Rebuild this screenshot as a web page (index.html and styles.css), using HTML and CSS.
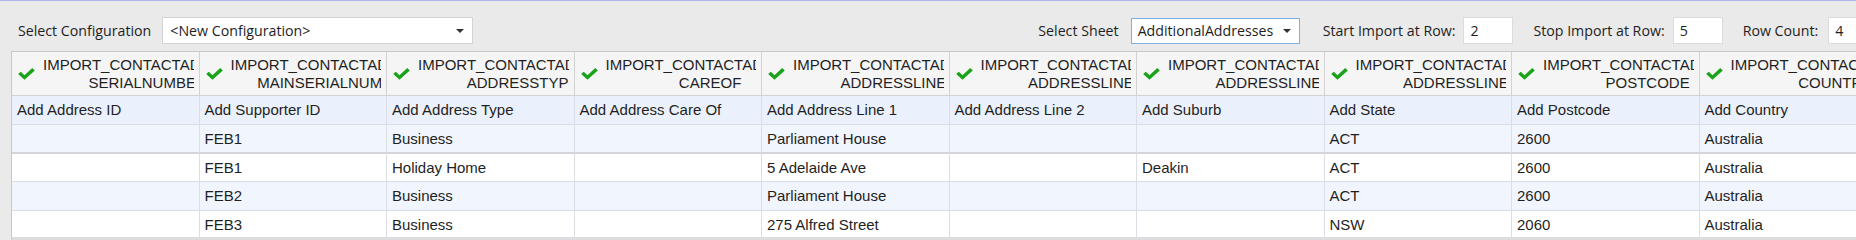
FILE: index.html
```html
<!DOCTYPE html>
<html>
<head>
<meta charset="utf-8">
<link rel="stylesheet" href="styles.css">
</head>
<body>
<div class="app">
  <div class="toolbar">
    <span class="label">Select Configuration</span>
    <div class="combo combo-config"><span class="combo-text">&lt;New Configuration&gt;</span><span class="arrow"></span></div>
    <div class="right">
      <span class="label">Select Sheet</span>
      <div class="combo combo-sheet"><span class="combo-text">AdditionalAddresses</span><span class="arrow"></span></div>
      <span class="label lbl-start">Start Import at Row:</span>
      <div class="input">2</div>
      <span class="label lbl-stop">Stop Import at Row:</span>
      <div class="input">5</div>
      <span class="label lbl-count">Row Count:</span>
      <div class="input input-wide">4</div>
    </div>
  </div>

  <div class="grid">
    <div class="hcell"><svg class="check" viewBox="0 0 18 13"><polygon points="0,6.5 2.8,4 6.8,7.8 15.2,0 18,2.6 6.8,12.8"/></svg><div class="htext"><div class="hlines"><span>IMPORT_CONTACTADDRESS</span><span>SERIALNUMBER</span></div></div></div>
    <div class="hcell"><svg class="check" viewBox="0 0 18 13"><polygon points="0,6.5 2.8,4 6.8,7.8 15.2,0 18,2.6 6.8,12.8"/></svg><div class="htext"><div class="hlines"><span>IMPORT_CONTACTADDRESS</span><span>MAINSERIALNUMBER</span></div></div></div>
    <div class="hcell"><svg class="check" viewBox="0 0 18 13"><polygon points="0,6.5 2.8,4 6.8,7.8 15.2,0 18,2.6 6.8,12.8"/></svg><div class="htext"><div class="hlines"><span>IMPORT_CONTACTADDRESS</span><span>ADDRESSTYPE</span></div></div></div>
    <div class="hcell"><svg class="check" viewBox="0 0 18 13"><polygon points="0,6.5 2.8,4 6.8,7.8 15.2,0 18,2.6 6.8,12.8"/></svg><div class="htext"><div class="hlines"><span>IMPORT_CONTACTADDRESS</span><span>CAREOF</span></div></div></div>
    <div class="hcell"><svg class="check" viewBox="0 0 18 13"><polygon points="0,6.5 2.8,4 6.8,7.8 15.2,0 18,2.6 6.8,12.8"/></svg><div class="htext"><div class="hlines"><span>IMPORT_CONTACTADDRESS</span><span>ADDRESSLINE1</span></div></div></div>
    <div class="hcell"><svg class="check" viewBox="0 0 18 13"><polygon points="0,6.5 2.8,4 6.8,7.8 15.2,0 18,2.6 6.8,12.8"/></svg><div class="htext"><div class="hlines"><span>IMPORT_CONTACTADDRESS</span><span>ADDRESSLINE2</span></div></div></div>
    <div class="hcell"><svg class="check" viewBox="0 0 18 13"><polygon points="0,6.5 2.8,4 6.8,7.8 15.2,0 18,2.6 6.8,12.8"/></svg><div class="htext"><div class="hlines"><span>IMPORT_CONTACTADDRESS</span><span>ADDRESSLINE3</span></div></div></div>
    <div class="hcell"><svg class="check" viewBox="0 0 18 13"><polygon points="0,6.5 2.8,4 6.8,7.8 15.2,0 18,2.6 6.8,12.8"/></svg><div class="htext"><div class="hlines"><span>IMPORT_CONTACTADDRESS</span><span>ADDRESSLINE4</span></div></div></div>
    <div class="hcell"><svg class="check" viewBox="0 0 18 13"><polygon points="0,6.5 2.8,4 6.8,7.8 15.2,0 18,2.6 6.8,12.8"/></svg><div class="htext"><div class="hlines"><span>IMPORT_CONTACTADDRESS</span><span>POSTCODE</span></div></div></div>
    <div class="hcell"><svg class="check" viewBox="0 0 18 13"><polygon points="0,6.5 2.8,4 6.8,7.8 15.2,0 18,2.6 6.8,12.8"/></svg><div class="htext"><div class="hlines"><span>IMPORT_CONTACTADDRESS</span><span>COUNTRY</span></div></div></div>

    <div class="cell add">Add Address ID</div>
    <div class="cell add">Add Supporter ID</div>
    <div class="cell add">Add Address Type</div>
    <div class="cell add">Add Address Care Of</div>
    <div class="cell add">Add Address Line 1</div>
    <div class="cell add">Add Address Line 2</div>
    <div class="cell add">Add Suburb</div>
    <div class="cell add">Add State</div>
    <div class="cell add">Add Postcode</div>
    <div class="cell add">Add Country</div>

    <div class="cell alt first"></div>
    <div class="cell alt first">FEB1</div>
    <div class="cell alt first">Business</div>
    <div class="cell alt first"></div>
    <div class="cell alt first">Parliament House</div>
    <div class="cell alt first"></div>
    <div class="cell alt first"></div>
    <div class="cell alt first">ACT</div>
    <div class="cell alt first">2600</div>
    <div class="cell alt first">Australia</div>

    <div class="cell"></div>
    <div class="cell">FEB1</div>
    <div class="cell">Holiday Home</div>
    <div class="cell"></div>
    <div class="cell">5 Adelaide Ave</div>
    <div class="cell"></div>
    <div class="cell">Deakin</div>
    <div class="cell">ACT</div>
    <div class="cell">2600</div>
    <div class="cell">Australia</div>

    <div class="cell alt tall"></div>
    <div class="cell alt tall">FEB2</div>
    <div class="cell alt tall">Business</div>
    <div class="cell alt tall"></div>
    <div class="cell alt tall">Parliament House</div>
    <div class="cell alt tall"></div>
    <div class="cell alt tall"></div>
    <div class="cell alt tall">ACT</div>
    <div class="cell alt tall">2600</div>
    <div class="cell alt tall">Australia</div>

    <div class="cell last"></div>
    <div class="cell last">FEB3</div>
    <div class="cell last">Business</div>
    <div class="cell last"></div>
    <div class="cell last">275 Alfred Street</div>
    <div class="cell last"></div>
    <div class="cell last"></div>
    <div class="cell last">NSW</div>
    <div class="cell last">2060</div>
    <div class="cell last">Australia</div>
  </div>
</div>
</body>
</html>
```

FILE: styles.css
```css
html, body {
  margin: 0;
  padding: 0;
  width: 1856px;
  height: 240px;
  overflow: hidden;
  background: #eaeaea;
}

.app {
  border-top: 1px solid #b4b4f0;
  width: 1856px;
  height: 239px;
  overflow: hidden;
}

.toolbar {
  display: flex;
  align-items: center;
  width: max-content;
  height: 27px;
  padding: 16px 0 7px 18px;
  font-family: "Open Sans", "Noto Sans", sans-serif;
  font-size: 14.2px;
  color: #1e1e1e;
  white-space: nowrap;
}

.toolbar > *,
.right > * {
  flex: none;
}

.label {
  line-height: 27px;
}

.combo {
  box-sizing: border-box;
  height: 27px;
  background: #fff;
  border: 1px solid #d4d4d4;
  display: flex;
  align-items: center;
  padding-left: 7px;
}

.combo-config {
  width: 311px;
  margin-left: 11px;
}

.combo-sheet {
  width: 169px;
  height: 26px;
  margin-left: 12px;
  margin-right: 23px;
  border-color: #7fb0e0;
  padding-left: 6px;
}

.combo-text {
  flex: 1;
}

.arrow {
  width: 0;
  height: 0;
  border-left: 4px solid transparent;
  border-right: 4px solid transparent;
  border-top: 4px solid #333;
  margin-right: 8px;
}

.right {
  display: flex;
  align-items: center;
  margin-left: 565px;
}

.input {
  box-sizing: border-box;
  width: 50px;
  height: 27px;
  line-height: 25px;
  background: #fff;
  border: 1px solid #dcdcdc;
  padding-left: 6px;
  margin-left: 8px;
  margin-right: 20px;
}

.input-wide {
  width: 60px;
  margin-left: 10px;
}

/* Grid */
.grid {
  display: grid;
  grid-template-columns: repeat(10, 187.5px);
  margin-left: 11px;
  border-left: 1px solid #c8c8c8;
  border-top: 1px solid #c8c8c8;
  width: max-content;
  font-family: "Liberation Sans", Arial, sans-serif;
  font-size: 15px;
  color: #1f1f1f;
  border-bottom: 3px solid #dcdcdc;
}

.hcell {
  box-sizing: border-box;
  height: 44px;
  background: #f5f5f5;
  border-right: 1px solid #d2d2d2;
  border-bottom: 1px solid #d2d2d2;
  display: flex;
  align-items: center;
  padding: 0 5px 0 6px;
  overflow: hidden;
}

.check {
  width: 17px;
  height: 12px;
  flex: none;
  margin-right: 8px;
  margin-top: 1px;
  fill: #19a319;
}

.htext {
  flex: 1;
  min-width: 0;
  overflow: hidden;
  height: 36px;
  margin-top: 1px;
}

.hlines {
  display: flex;
  flex-direction: column;
  align-items: center;
  width: max-content;
  line-height: 18px;
  white-space: nowrap;
}

.cell {
  box-sizing: border-box;
  height: 28px;
  line-height: 27px;
  padding-left: 5px;
  background: #fff;
  border-right: 1px solid #dcdee6;
  border-bottom: 1px solid #dcdee6;
  white-space: nowrap;
  overflow: hidden;
}

.cell.add {
  height: 29px;
  line-height: 28px;
  background: #ebf1fc;
}

.cell.alt {
  background: #f1f5fd;
}

.cell.first {
  height: 29px;
  line-height: 27px;
  border-bottom: 2px solid #d4d5da;
}

.cell.tall {
  height: 29px;
  line-height: 28px;
}

.cell.last {
  height: 27px;
  line-height: 27px;
}
```
